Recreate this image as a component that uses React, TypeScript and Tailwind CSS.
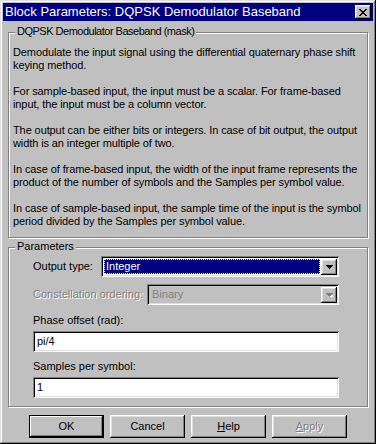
const raised =
  "shadow-[inset_-1px_-1px_#000,inset_1px_1px_#fff,inset_-2px_-2px_#808080,inset_2px_2px_#dfdfdf]";
const sunken =
  "shadow-[inset_1px_1px_#808080,inset_-1px_-1px_#fff,inset_2px_2px_#000,inset_-2px_-2px_#dfdfdf]";
const etched = "border border-[#808080] shadow-[inset_1px_1px_#fff,1px_1px_#fff]";
const disabledText = "text-[#808080] [text-shadow:1px_1px_#fff]";

function Arrow({ disabled }: { disabled?: boolean }) {
  return (
    <div className={`w-[16px] h-[16px] bg-[#c0c0c0] flex items-center justify-center ${raised}`}>
      <svg width="7" height="4" viewBox="0 0 7 4">
        {disabled && <path d="M2 4h5v-1h1v-1h1v-1z" fill="#fff" />}
        <path d="M0 0h7v1h-1v1h-1v1h-1v1h-1v-1h-1v-1h-1v-1h-1z" fill={disabled ? "#808080" : "#000"} />
      </svg>
    </div>
  );
}

function Group({ label, className, labelClass, children }: { label: string; className?: string; labelClass?: string; children: React.ReactNode }) {
  return (
    <div className={`relative ${etched} ${className ?? ""}`}>
      <span className={`absolute left-[6px] top-[-8px] bg-[#c0c0c0] px-[2px] leading-[13px] text-black ${labelClass ?? ""}`}>{label}</span>
      {children}
    </div>
  );
}

const paragraphs = [
  ["Demodulate the input signal using the differential quaternary phase shift", "keying method."],
  ["For sample-based input, the input must be a scalar. For frame-based", "input, the input must be a column vector."],
  ["The output can be either bits or integers. In case of bit output, the output", "width is an integer multiple of two."],
  ["In case of frame-based input, the width of the input frame represents the", "product of the number of symbols and the Samples per symbol value."],
  ["In case of sample-based input, the sample time of the input is the symbol", "period divided by the Samples per symbol value."],
];

export default function App() {
  return (
    <div
      className={`w-[376px] h-[444px] bg-[#c0c0c0] p-[3px] flex flex-col text-[11px] text-black ${"shadow-[inset_-1px_-1px_#000,inset_1px_1px_#dfdfdf,inset_-2px_-2px_#808080,inset_2px_2px_#fff]"}`}
      style={{ fontFamily: '"Liberation Sans", Arial, sans-serif' }}
    >
      {/* title bar */}
      <div className="h-[18px] bg-[#000080] flex items-center justify-between pl-[2px] pr-[2px]">
        <span className="text-white text-[13px] leading-[18px]">Block Parameters: DQPSK Demodulator Baseband</span>
        <div className={`w-[16px] h-[14px] bg-[#c0c0c0] flex items-center justify-center ${raised}`}>
          <svg width="8" height="7" viewBox="0 0 8 7">
            <path d="M0 0h2v1h1v1h2v-1h1v-1h2v1h-1v1h-1v1h-1v1h1v1h1v1h1v1h-2v-1h-1v-1h-2v1h-1v1h-2v-1h1v-1h1v-1h1v-1h-1v-1h-1v-1h-1z" fill="#000" />
          </svg>
        </div>
      </div>

      <div className="flex flex-col px-[5px]">
        <Group
          label="DQPSK Demodulator Baseband (mask)"
          labelClass="tracking-[-0.5px]"
          className="mt-[11px] pt-[13px] pl-[4px] pb-[9px]"
        >
          <div className="flex flex-col gap-[13px] leading-[13px] tracking-[-0.1px]">
            {paragraphs.map((p, i) => (
              <div key={i}>
                {p.map((l) => (
                  <div key={l} className="whitespace-nowrap">{l}</div>
                ))}
              </div>
            ))}
          </div>
        </Group>

        <Group label="Parameters" className="mt-[9px] pt-[8px] pl-[24px] pr-[28px] pb-[8px]">
          <div className="flex flex-col">
            <div className="flex items-center h-[21px]">
              <span className="w-[68px]">Output type:</span>
              <div className={`flex-1 h-[21px] bg-white flex items-center p-[2px] ${sunken}`}>
                <div className="flex-1 h-[17px] p-[1px]">
                  <div className="h-full bg-[#000080] text-white border border-dotted border-[#ffff80] leading-[13px] pl-[1px]">Integer</div>
                </div>
                <Arrow />
              </div>
            </div>
            <div className="flex items-center h-[21px] mt-[7px]">
              <span className={`w-[114px] ${disabledText}`}>Constellation ordering:</span>
              <div className={`flex-1 h-[21px] bg-[#c0c0c0] flex items-center p-[2px] ${sunken}`}>
                <div className="flex-1 pl-[3px] text-[#808080]">Binary</div>
                <Arrow disabled />
              </div>
            </div>
            <div className="mt-[9px] leading-[13px]">Phase offset (rad):</div>
            <div className={`mt-[4px] h-[21px] bg-white flex items-center pl-[4px] ${sunken}`}>pi/4</div>
            <div className="mt-[8px] leading-[13px]">Samples per symbol:</div>
            <div className={`mt-[4px] h-[21px] bg-white flex items-center pl-[4px] ${sunken}`}>1</div>
          </div>
        </Group>
      </div>

      <div className="flex justify-center gap-[6px] mt-[8px]">
        <button className="w-[75px] h-[23px] border border-black bg-[#c0c0c0] shadow-[inset_-1px_-1px_#000,inset_1px_1px_#fff,inset_-2px_-2px_#808080]">
          OK
        </button>
        <button className={`w-[75px] h-[23px] bg-[#c0c0c0] ${raised}`}>Cancel</button>
        <button className={`w-[75px] h-[23px] bg-[#c0c0c0] ${raised}`}>
          <span className="underline">H</span>elp
        </button>
        <button className={`w-[75px] h-[23px] bg-[#c0c0c0] ${raised} ${disabledText}`}>
          <span className="underline">A</span>pply
        </button>
      </div>
    </div>
  );
}
